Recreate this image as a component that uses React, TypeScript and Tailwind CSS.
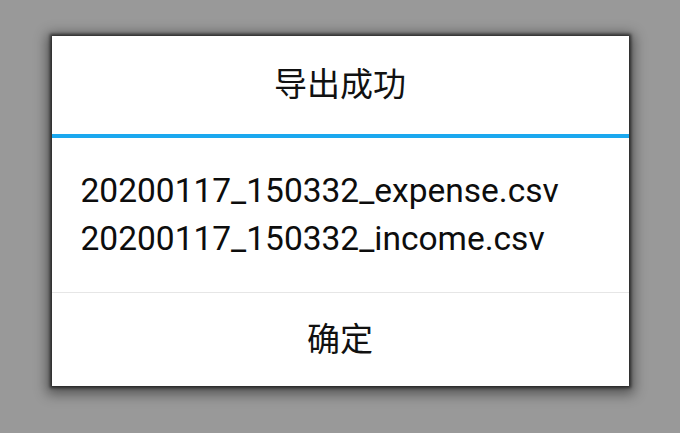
import React from "react";

const files = ["20200117_150332_expense.csv", "20200117_150332_income.csv"];

export default function App() {
  return (
    <div
      className="w-full h-[433px] bg-[#999999] flex justify-center items-start pt-[36px] overflow-hidden"
      style={{ fontFamily: 'Roboto, "Noto Sans CJK SC", sans-serif' }}
    >
      <div className="w-[577px] h-[350px] bg-white flex flex-col shadow-[0_0_3px_2px_rgba(0,0,0,0.6),0_3px_12px_5px_rgba(0,0,0,0.45)]">
        <div className="h-[98px] flex items-center justify-center text-[33px] text-[#111]">
          导出成功
        </div>
        <div className="h-[4px] bg-[#1ba8ef]" />
        <div className="flex-1 flex flex-col justify-center pl-[29px] text-[33.5px] leading-[48px] text-[#0d0d0d]">
          {files.map((f) => (
            <div key={f}>{f}</div>
          ))}
        </div>
        <div className="h-px bg-[#e6e6e6]" />
        <div className="h-[93px] flex items-center justify-center text-[33px] text-[#111]">
          确定
        </div>
      </div>
    </div>
  );
}
